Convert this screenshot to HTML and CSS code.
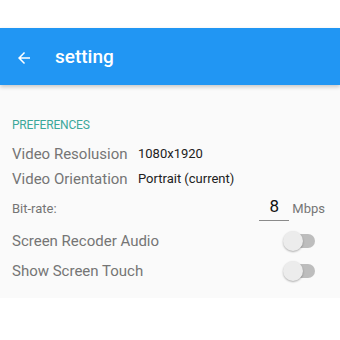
FILE: index.html
```html
<!DOCTYPE html>
<html lang="en">
<head>
    <meta charset="UTF-8">
    <title>setting</title>
    <link rel="stylesheet" href="styles.css">
</head>
<body>
    <div class="status-space"></div>
    <header class="toolbar">
        <svg class="back" width="18" height="18" viewBox="0 0 24 24">
            <path d="M20 11H7.83l5.59-5.59L12 4l-8 8 8 8 1.41-1.41L7.83 13H20v-2z" fill="#fff"/>
        </svg>
        <h1>setting</h1>
    </header>
    <main class="panel">
        <div class="category">PREFERENCES</div>
        <div class="row">
            <span class="label">Video Resolusion</span>
            <span class="value">1080x1920</span>
        </div>
        <div class="row">
            <span class="label">Video Orientation</span>
            <span class="value">Portrait (current)</span>
        </div>
        <div class="row bitrate">
            <span class="small-label">Bit-rate:</span>
            <span class="rate-input">8</span>
            <span class="unit">Mbps</span>
        </div>
        <div class="row switch-row">
            <span class="label">Screen Recoder Audio</span>
            <span class="switch"><span class="thumb"></span></span>
        </div>
        <div class="row switch-row">
            <span class="label">Show Screen Touch</span>
            <span class="switch"><span class="thumb"></span></span>
        </div>
    </main>
</body>
</html>
```

FILE: styles.css
```css
body {
    margin: 0;
    font-family: Roboto, "Noto Sans", sans-serif;
    background-color: #ffffff;
}

.status-space {
    height: 28px;
}

.toolbar {
    height: 57px;
    background-color: #2196f3;
    display: flex;
    align-items: center;
    padding-left: 15px;
    box-shadow: 0 2px 4px rgba(0, 0, 0, 0.2);
    position: relative;
}

.back {
    display: block;
    margin-top: 2px;
}

.toolbar h1 {
    margin: 0 0 0 22px;
    color: #ffffff;
    font-size: 19px;
    font-weight: 500;
}

.panel {
    background-color: #fafafa;
    height: 213px;
    padding: 30px 12px 0 12px;
    box-sizing: border-box;
}

.category {
    color: #3ba89a;
    font-size: 12px;
    letter-spacing: -0.2px;
    height: 20px;
    line-height: 20px;
    margin-bottom: 6px;
}

.row {
    display: flex;
    align-items: center;
    height: 25px;
}

.label {
    color: #757575;
    font-size: 15px;
    width: 126px;
    white-space: nowrap;
}

.value {
    color: #212121;
    font-size: 13px;
}

.bitrate {
    height: 34px;
}

.small-label {
    color: #757575;
    font-size: 13px;
    flex: 1;
}

.rate-input {
    width: 30px;
    text-align: center;
    font-size: 17px;
    color: #111111;
    border-bottom: 1px solid #8a8a8a;
    padding-bottom: 4px;
    margin-right: 3px;
}

.unit {
    color: #757575;
    font-size: 13px;
    margin-right: 3px;
}

.switch-row {
    justify-content: space-between;
    height: 29px;
    margin-top: 1px;
}

.switch {
    position: relative;
    width: 30px;
    height: 14px;
    border-radius: 7px;
    background-color: #bdbdbd;
    margin-right: 13px;
}

.thumb {
    position: absolute;
    left: -2px;
    top: -3px;
    width: 20px;
    height: 20px;
    border-radius: 50%;
    background-color: #ececec;
    box-shadow: 0 1px 2px rgba(0, 0, 0, 0.3);
}
```
